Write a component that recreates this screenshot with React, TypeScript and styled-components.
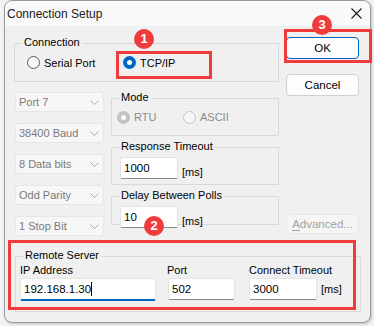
import React from 'react';
import styled, { createGlobalStyle, css } from 'styled-components';

const GlobalStyle = createGlobalStyle`
  html, body { margin: 0; padding: 0; }
  body {
    background: #f4f4f4;
    font-family: "Liberation Sans", Arial, sans-serif;
    font-size: 11px;
    color: #000;
    width: 374px;
    height: 326px;
    overflow: hidden;
  }
`;

const Window = styled.div`
  position: relative;
  box-sizing: border-box;
  margin-left: 4px;
  width: 367px;
  height: 323px;
  border: 1px solid #9a9a9a;
  border-radius: 8px;
  background: #f0f0f0;
  box-shadow: 1px 1px 3px rgba(0, 0, 0, 0.22);
  display: flex;
  flex-direction: column;
`;

const TitleBar = styled.div`
  height: 25px;
  flex: none;
  display: flex;
  align-items: center;
  justify-content: space-between;
  padding: 0 8px 0 2px;
  background: #f9f9f9;
  border-radius: 7px 7px 0 0;
  font-size: 12px;
  color: #1a1a1a;
`;

const CloseGlyph = styled.svg`
  width: 11px;
  height: 11px;
  display: block;
`;

const Client = styled.div`
  flex: 1;
  display: flex;
  flex-direction: column;
`;

const TopSection = styled.div`
  display: flex;
  padding-left: 9px;
  gap: 7px;
`;

const MainCol = styled.div`
  width: 265px;
  padding-top: 17px;
  display: flex;
  flex-direction: column;
`;

const ButtonCol = styled.div`
  width: 73px;
  padding-top: 11px;
  display: flex;
  flex-direction: column;
`;

const Group = styled.div<{ $height: number; $width?: number }>`
  position: relative;
  box-sizing: border-box;
  height: ${(p) => p.$height}px;
  ${(p) => p.$width && css`width: ${p.$width}px;`}
  border: 1px solid #d9d9d9;
  border-radius: 1px;
`;

const GroupLabel = styled.span`
  position: absolute;
  left: 7px;
  top: -8px;
  padding: 0 2px;
  line-height: 13px;
  background: #f0f0f0;
  color: #000;
  white-space: nowrap;
`;

const RadioRow = styled.div<{ $cols: string; $pad: number }>`
  height: 100%;
  display: grid;
  grid-template-columns: ${(p) => p.$cols};
  align-items: center;
  padding-left: ${(p) => p.$pad}px;
`;

const RadioOption = styled.label<{ $disabled?: boolean }>`
  display: flex;
  align-items: center;
  gap: 4px;
  white-space: nowrap;
  color: ${(p) => (p.$disabled ? '#8a8a8a' : '#000')};
  font-size: 11px;
`;

const RadioDot = styled.span<{ $checked?: boolean; $disabled?: boolean }>`
  box-sizing: border-box;
  width: 13px;
  height: 13px;
  border-radius: 50%;
  flex: none;
  position: relative;
  ${(p) =>
    p.$checked
      ? css`
          background: ${p.$disabled ? '#c2c2c2' : '#0067c0'};
          &::after {
            content: '';
            position: absolute;
            left: 4px;
            top: 4px;
            width: 5px;
            height: 5px;
            border-radius: 50%;
            background: #fff;
          }
        `
      : css`
          background: ${p.$disabled ? '#f5f5f5' : '#f7f7f7'};
          border: 1px solid ${p.$disabled ? '#c6c6c6' : '#5c5c5c'};
        `}
`;

const SettingsRow = styled.div`
  margin-top: 10px;
  display: flex;
  gap: 7px;
`;

const ComboCol = styled.div`
  margin-left: 1px;
  width: 89px;
  display: flex;
  flex-direction: column;
  gap: 11px;
`;

const Combo = styled.div`
  box-sizing: border-box;
  height: 20px;
  display: flex;
  align-items: center;
  justify-content: space-between;
  padding: 0 4px 0 3px;
  background: #f7f7f7;
  border: 1px solid #e6e6e6;
  border-radius: 3px;
  color: #7a7a7a;
  white-space: nowrap;
`;

const Chevron = styled.svg`
  width: 9px;
  height: 5px;
  display: block;
`;

const GroupCol = styled.div`
  width: 168px;
  padding-top: 6px;
  display: flex;
  flex-direction: column;
  gap: 11px;
`;

const FieldLine = styled.div<{ $align: 'center' | 'flex-end' }>`
  display: flex;
  align-items: ${(p) => p.$align};
  gap: 4px;
`;

const TimeoutBody = styled.div`
  padding: 9px 0 0 8px;
`;

const TextBox = styled.div<{ $width: number; $focused?: boolean }>`
  box-sizing: border-box;
  width: ${(p) => p.$width}px;
  height: 22px;
  display: flex;
  align-items: center;
  padding: 0 3px;
  background: #fff;
  border: 1px solid #e3e3e3;
  border-bottom: 1px solid #8a8a8a;
  border-radius: 2px;
  color: #000;
  font-size: 11.5px;
  ${(p) =>
    p.$focused &&
    css`
      height: 23px;
      border-bottom: 2px solid #0067c0;
    `}
`;

const Caret = styled.span`
  display: inline-block;
  width: 1px;
  height: 14px;
  background: #000;
`;

const Unit = styled.span`
  line-height: 13px;
  color: #000;
`;

const Button = styled.div<{ $kind: 'default' | 'normal' | 'disabled'; $gap: number }>`
  box-sizing: border-box;
  height: ${(p) => (p.$kind === 'disabled' ? 20 : 22)}px;
  margin-top: ${(p) => p.$gap}px;
  display: flex;
  align-items: center;
  justify-content: center;
  border-radius: 4px;
  font-size: 11.5px;
  ${(p) =>
    p.$kind === 'default'
      ? css`
          background: #fdfdfd;
          border: 1px solid #0067c0;
          color: #000;
        `
      : p.$kind === 'normal'
      ? css`
          background: #fdfdfd;
          border: 1px solid #d0d0d0;
          color: #000;
        `
      : css`
          background: #f5f5f5;
          border: 1px solid #e8e8e8;
          color: #a2a2a2;
        `}
  u {
    text-decoration: underline;
    text-underline-offset: 2px;
  }
`;

const RemoteGroup = styled(Group)`
  margin: 20px 0 0 10px;
`;

const RemoteGrid = styled.div`
  display: grid;
  grid-template-columns: 148px 81px auto;
  padding: 7px 0 0 4px;
`;

const Field = styled.div`
  display: flex;
  flex-direction: column;
  gap: 1px;
`;

const FieldLabel = styled.span<{ $shift?: number }>`
  line-height: 13px;
  margin-left: ${(p) => p.$shift ?? 0}px;
  white-space: nowrap;
`;

const Highlight = styled.div<{ $l: number; $t: number; $w: number; $h: number }>`
  position: absolute;
  box-sizing: border-box;
  left: ${(p) => p.$l}px;
  top: ${(p) => p.$t}px;
  width: ${(p) => p.$w}px;
  height: ${(p) => p.$h}px;
  border: 3px solid #ef3b3b;
  pointer-events: none;
`;

const Badge = styled.div<{ $l: number; $t: number }>`
  position: absolute;
  left: ${(p) => p.$l}px;
  top: ${(p) => p.$t}px;
  width: 20px;
  height: 20px;
  border-radius: 50%;
  background: #ee3c3c;
  color: #fff;
  font-family: "Liberation Sans", Arial, sans-serif;
  font-weight: bold;
  font-size: 13px;
  line-height: 20px;
  text-align: center;
`;

const combos = ['Port 7', '38400 Baud', '8 Data bits', 'Odd Parity', '1 Stop Bit'];

const ChevronIcon = () => (
  <Chevron viewBox="0 0 9 5">
    <polyline points="0.5,0.5 4.5,4.5 8.5,0.5" fill="none" stroke="#a8a8a8" strokeWidth="1" />
  </Chevron>
);

export default function App() {
  return (
    <>
      <GlobalStyle />
      <Window>
        <TitleBar>
          <span>Connection Setup</span>
          <CloseGlyph viewBox="0 0 11 11">
            <path d="M0.5 0.5 L10.5 10.5 M10.5 0.5 L0.5 10.5" stroke="#1c1c1c" strokeWidth="1.1" fill="none" />
          </CloseGlyph>
        </TitleBar>
        <Client>
          <TopSection>
            <MainCol>
              <Group $height={39}>
                <GroupLabel>Connection</GroupLabel>
                <RadioRow $cols="96px auto" $pad={12}>
                  <RadioOption>
                    <RadioDot />
                    Serial Port
                  </RadioOption>
                  <RadioOption>
                    <RadioDot $checked />
                    TCP/IP
                  </RadioOption>
                </RadioRow>
              </Group>
              <SettingsRow>
                <ComboCol>
                  {combos.map((c) => (
                    <Combo key={c}>
                      <span>{c}</span>
                      <ChevronIcon />
                    </Combo>
                  ))}
                </ComboCol>
                <GroupCol>
                  <Group $height={38}>
                    <GroupLabel>Mode</GroupLabel>
                    <RadioRow $cols="66px auto" $pad={5}>
                      <RadioOption $disabled>
                        <RadioDot $checked $disabled />
                        RTU
                      </RadioOption>
                      <RadioOption $disabled>
                        <RadioDot $disabled />
                        ASCII
                      </RadioOption>
                    </RadioRow>
                  </Group>
                  <Group $height={38}>
                    <GroupLabel>Response Timeout</GroupLabel>
                    <TimeoutBody>
                      <FieldLine $align="flex-end">
                        <TextBox $width={58}>1000</TextBox>
                        <Unit>[ms]</Unit>
                      </FieldLine>
                    </TimeoutBody>
                  </Group>
                  <Group $height={29}>
                    <GroupLabel>Delay Between Polls</GroupLabel>
                    <TimeoutBody>
                      <FieldLine $align="flex-end">
                        <TextBox $width={58}>10</TextBox>
                        <Unit>[ms]</Unit>
                      </FieldLine>
                    </TimeoutBody>
                  </Group>
                </GroupCol>
              </SettingsRow>
            </MainCol>
            <ButtonCol>
              <Button $kind="default" $gap={0}>OK</Button>
              <Button $kind="normal" $gap={15}>Cancel</Button>
              <Button $kind="disabled" $gap={118}>
                <span><u>A</u>dvanced...</span>
              </Button>
            </ButtonCol>
          </TopSection>
          <RemoteGroup $height={56} $width={346}>
            <GroupLabel>Remote Server</GroupLabel>
            <RemoteGrid>
              <Field>
                <FieldLabel>IP Address</FieldLabel>
                <TextBox $width={136} $focused>
                  192.168.1.30<Caret />
                </TextBox>
              </Field>
              <Field>
                <FieldLabel $shift={-1}>Port</FieldLabel>
                <TextBox $width={67}>502</TextBox>
              </Field>
              <Field>
                <FieldLabel>Connect Timeout</FieldLabel>
                <FieldLine $align="center">
                  <TextBox $width={68}>3000</TextBox>
                  <Unit>[ms]</Unit>
                </FieldLine>
              </Field>
            </RemoteGrid>
          </RemoteGroup>
        </Client>
        <Highlight $l={111} $t={50} $w={96} $h={28} />
        <Highlight $l={279} $t={28} $w={88} $h={34} />
        <Highlight $l={3} $t={239} $w={348} $h={70} />
        <Badge $l={129} $t={28}>1</Badge>
        <Badge $l={307} $t={14}>3</Badge>
        <Badge $l={139} $t={215}>2</Badge>
      </Window>
    </>
  );
}
